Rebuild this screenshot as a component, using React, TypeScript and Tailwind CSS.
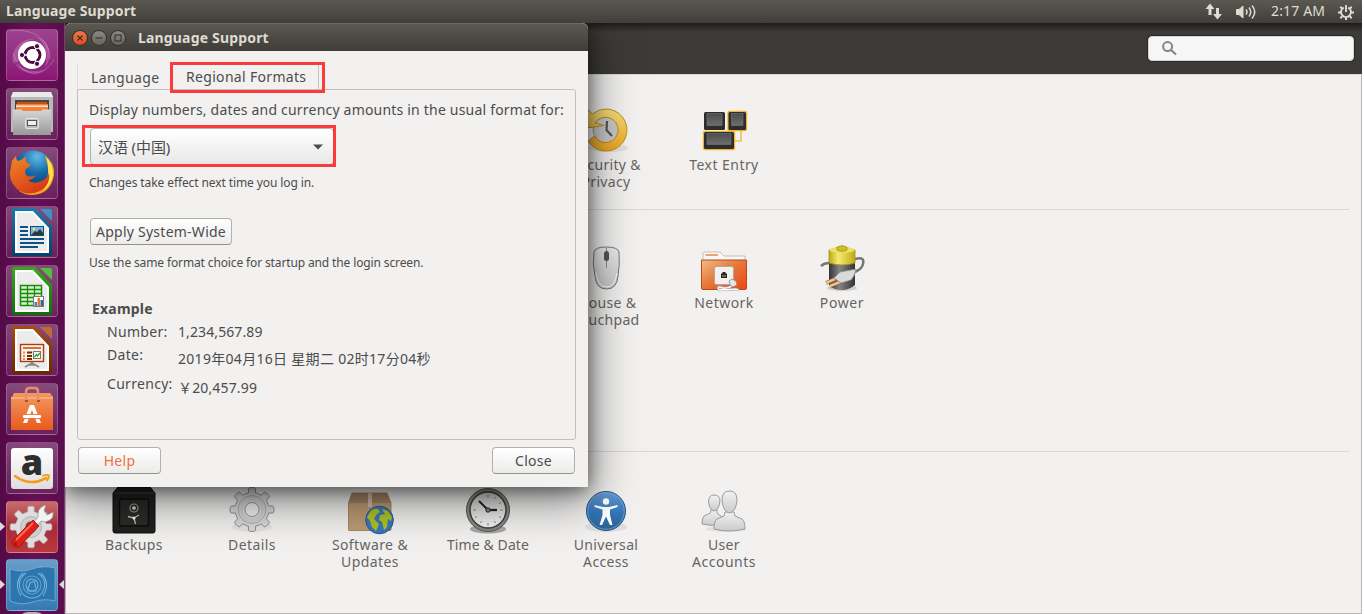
import type { ReactNode } from 'react';

function gearPath(cx: number, cy: number, outer: number, inner: number, teeth: number) {
  const pts: string[] = [];
  const step = (Math.PI * 2) / teeth;
  for (let i = 0; i < teeth; i++) {
    const a = i * step - Math.PI / 2;
    const add = (r: number, t: number) =>
      pts.push(`${(cx + r * Math.cos(a + t * step)).toFixed(2)} ${(cy + r * Math.sin(a + t * step)).toFixed(2)}`);
    add(inner, -0.27);
    add(outer - 1, -0.21);
    add(outer, -0.14);
    add(outer, 0.14);
    add(outer - 1, 0.21);
    add(inner, 0.27);
    add(inner, 0.4);
  }
  return `M${pts.join('L')}Z`;
}

/* ---------- launcher ---------- */

function Tile({ tone, left, right, children }: { tone: string; left?: boolean; right?: boolean; children: ReactNode }) {
  return (
    <div className="relative h-[52px] w-[52px] shrink-0">
      <div className={`h-full w-full rounded-[4px] border border-white/20 ${tone}`} />
      <svg className="absolute inset-0 overflow-visible" width="52" height="52" viewBox="0 0 52 52">
        {children}
      </svg>
      {left && (
        <svg className="absolute top-[21px] -left-[6px]" width="5" height="9" viewBox="0 0 5 9">
          <path d="M0 0L5 4.5L0 9Z" fill="#dcd8dc" />
        </svg>
      )}
      {right && (
        <svg className="absolute top-[21px] -right-[6px]" width="5" height="9" viewBox="0 0 5 9">
          <path d="M5 0L0 4.5L5 9Z" fill="#dcd8dc" />
        </svg>
      )}
    </div>
  );
}

function OfficeDoc({ edge, dark, fold, children }: { edge: string; dark: string; fold: string; children: ReactNode }) {
  const id = `doc${edge.slice(1)}`;
  return (
    <>
      <defs>
        <linearGradient id={id} x1="0" y1="0" x2="0" y2="1">
          <stop offset="0" stopColor={edge} />
          <stop offset="1" stopColor={dark} />
        </linearGradient>
      </defs>
      <path d="M8 2H29L46 20V48Q46 50 44 50H8Q6 50 6 48V4Q6 2 8 2Z" fill={`url(#${id})`} />
      <path d="M34 3H44Q46 3 46 5V15Z" fill={fold} />
      <path d="M9 5H27L43 22V47H9Z" fill="#fff" />
      <path d="M11 7H26L41 23V45H11Z" fill="#ececec" />
      {children}
    </>
  );
}

function Launcher() {
  const glass = 'bg-linear-to-b from-white/25 to-white/8';
  return (
    <div className="flex h-full w-[65px] shrink-0 flex-col gap-[7px] overflow-hidden border-r border-[#7d3b72] bg-linear-to-r from-[#540a47] via-[#651055] to-[#5a0d4c] pt-[6px] pl-[6px]">
      <Tile tone="bg-linear-to-b from-[#9c4290] to-[#8b1575]">
        <path d="M7 34C5 20 15 8 31 10C17 10 11 20 13 32ZM30 8C43 10 48 27 39 39C43 25 40 14 30 8ZM40 40C29 49 13 43 8 33C18 42 28 44 40 40Z" fill="#fff" opacity=".2" />
        <path d="M4 2C24 -1 44 8 44 30M48 30C37 51 15 49 7 24" fill="none" stroke="#e4b9dc" strokeWidth=".8" opacity=".4" />
        <circle cx="26" cy="26" r="14" fill="#fff" />
        <circle cx="26.5" cy="26" r="7.4" fill="none" stroke="#4b0c42" strokeWidth="3" />
        <path d="M26.5 26L17 26M26.5 26L31 17.5M26.5 26L31 34.5" stroke="#fff" strokeWidth="1.3" />
        <circle cx="26.500" cy="26" r="5.900" fill="#fff" />
        <g fill="#4b0c42" stroke="#fff" strokeWidth="1">
          <circle cx="16" cy="26" r="2.6" />
          <circle cx="31" cy="17.2" r="2.6" />
          <circle cx="31" cy="34.8" r="2.6" />
        </g>
      </Tile>
      <Tile tone={glass}>
        <defs>
          <linearGradient id="cab" x1="0" y1="0" x2="0" y2="1">
            <stop offset="0" stopColor="#d6d6d6" />
            <stop offset="1" stopColor="#999" />
          </linearGradient>
        </defs>
        <path d="M7 4H45L47 9V44H5V9Z" fill="#b9b9b9" />
        <path d="M7 4H45L47 9H5Z" fill="#e9e9e9" />
        <path d="M9 12H43V24H9Z" fill="#4b4642" />
        <path d="M11 14H41V17H11Z" fill="#b8590f" />
        <path d="M10 16H42V24H10Z" fill="#f0813f" />
        <path d="M10 17.5H42V19H10Z" fill="#fde3cf" />
        <path d="M7 21.500H15Q16 21.500 17 23H35Q36 21.500 37 21.500H45V47H7Z" fill="url(#cab)" />
        <rect x="19.500" y="30.500" width="13" height="10" rx="1.500" fill="#bdbdbd" stroke="#e4e4e4" />
        <rect x="21.500" y="32.500" width="9" height="5" fill="#eee" stroke="#555" />
      </Tile>
      <Tile tone={glass}>
        <defs>
          <radialGradient id="fxb" cx=".6" cy=".15" r=".8">
            <stop offset="0" stopColor="#5bbbe8" />
            <stop offset=".5" stopColor="#176aa8" />
            <stop offset="1" stopColor="#0b3c72" />
          </radialGradient>
          <linearGradient id="fxo" x1="0" y1="0" x2=".6" y2="1">
            <stop offset="0" stopColor="#f08a24" />
            <stop offset="1" stopColor="#d93a17" />
          </linearGradient>
        </defs>
        <circle cx="27" cy="24" r="20.500" fill="url(#fxb)" />
        <path d="M39 9Q49 15 48 28Q45 47 26 48Q19 48 13 44L28 43Q37 41 41 32Q44 22 39 9Z" fill="#f9a51b" />
        <path d="M40 10Q47 17 47 28Q45 38 38 43Q43 32 42 27Q43 18 40 10Z" fill="#ffe552" />
        <path d="M6 14Q8 11 10 9Q10 13 12 14Q18 12 20 9Q19 13 21 16L25 17Q24 20 20 22Q18 25 20 28Q23 31 30 28Q27 33 22 33Q27 38 36 34Q42 31 43 25Q45 38 34 44Q21 50 11 42Q1 32 5 20Z" fill="url(#fxo)" />
      </Tile>
      <Tile tone={glass}>
        <OfficeDoc edge="#1d79ae" dark="#073f6b" fold="#3b92c4">
          <path d="M14 21H22M14 25H22M14 29H22M14 33H38M14 37H38M14 41H32" stroke="#0d5286" strokeWidth="1.800" />
          <rect x="24.500" y="20.500" width="13" height="9" fill="#79b5df" stroke="#0d4e80" />
          <path d="M25 29L29 25L31 26L34 23L37 27V29Z" fill="#333a2c" />
          <circle cx="28" cy="23" r="1.200" fill="#ffe37a" />
        </OfficeDoc>
      </Tile>
      <Tile tone={glass}>
        <OfficeDoc edge="#38a81f" dark="#0e6f06" fold="#55bd40">
          <rect x="14.500" y="20.500" width="21" height="20" fill="#d6f3cd" stroke="#1b8a0b" strokeWidth="1.500" />
          <path d="M14 24.500H36M14 28.500H36M14 32.500H36M14 36.500H36M21.500 20V41M28.500 20V41" stroke="#1b8a0b" strokeWidth="1.300" />
          <rect x="27.500" y="31.500" width="10" height="10" fill="#fff" stroke="#777" />
          <path d="M28.500 37H31V41H28.500Z" fill="#2b8ee0" />
          <path d="M31.500 33H34V41H31.500Z" fill="#f0761d" />
          <path d="M34.500 35H37V41H34.500Z" fill="#1c6bb4" />
        </OfficeDoc>
      </Tile>
      <Tile tone={glass}>
        <OfficeDoc edge="#a84c12" dark="#6b2600" fold="#bd6c37">
          <path d="M26 38V40M26 39L19 43M26 39L33 43M22 41H30" stroke="#888" strokeWidth="1.500" fill="none" />
          <rect x="14.500" y="20.500" width="23" height="17" fill="#fdf2ec" stroke="#ab3d0b" strokeWidth="1.400" />
          <path d="M17 24H35" stroke="#d0602a" strokeWidth="1.800" />
          <path d="M17 28.500H19M17 32H19M17 35H19" stroke="#e88a50" strokeWidth="1.800" />
          <path d="M21 28.500H26M21 32H26M21 35H26" stroke="#7a2900" strokeWidth="1.800" />
          <rect x="27.500" y="27.500" width="7" height="7" fill="#fff" stroke="#777" />
          <path d="M28.500 33L30.500 30.500L31.500 32L34 29" stroke="#2b9e2b" strokeWidth="1.300" fill="none" />
        </OfficeDoc>
      </Tile>
      <Tile tone={glass}>
        <defs>
          <linearGradient id="bag" x1="0" y1="0" x2="0" y2="1">
            <stop offset="0" stopColor="#f3995f" />
            <stop offset="1" stopColor="#ea5a1c" />
          </linearGradient>
        </defs>
        <path d="M6 14L8 10H44L47 14V47H5V14Z" fill="url(#bag)" />
        <path d="M5 14H47V16H5Z" fill="#f8bd94" opacity=".6" />
        <path d="M20 18V9Q20 5 24 5H29Q32 5 32 9V18" fill="none" stroke="#e89168" strokeWidth="2.500" />
        <path d="M19 17H22V19H19ZM31 17H34V19H31Z" fill="#b64b25" />
        <path d="M24 22H28L35 40H31L26 27L21 40H17Z" fill="#fff" />
        <rect x="16.500" y="31.500" width="19" height="4" rx="1.500" fill="#fff" stroke="#ee6f32" strokeWidth=".9" />
      </Tile>
      <Tile tone={glass}>
        <defs>
          <linearGradient id="amz" x1="0" y1="0" x2="0" y2="1">
            <stop offset="0" stopColor="#fff" />
            <stop offset="1" stopColor="#dedede" />
          </linearGradient>
        </defs>
        <rect x="5" y="6" width="42" height="41" rx="3" fill="url(#amz)" />
        <text x="26" y="33" textAnchor="middle" fontFamily="Open Sans, Noto Sans, sans-serif" fontWeight="800" fontSize="36" fill="#2d2d2d">
          a
        </text>
        <path d="M9 34Q24 45 40 36" fill="none" stroke="#f79a15" strokeWidth="2.600" strokeLinecap="round" />
        <path d="M36 34Q41 32 43 33.500Q43 36.500 40.500 39" fill="none" stroke="#f79a15" strokeWidth="1.800" />
      </Tile>
      <Tile tone="bg-linear-to-b from-[#c86b6e] via-[#a62b37] to-[#ba3840]" left>
        <path d={gearPath(25, 26, 21, 15.5, 8)} fill="#dedede" stroke="#aaa" strokeWidth=".7" />
        <circle cx="25" cy="26" r="10.500" fill="#cfcfcf" stroke="#b6b6b6" />
        <circle cx="25" cy="26" r="6" fill="#a92f3b" stroke="#bbb" />
        <path d="M27 22L32 16Q31 8 37 5L40 4L38 10L41 14L47 11Q48 18 42 20Q38 22 35 20L30 26Z" fill="#f3f3f3" stroke="#949494" strokeWidth=".8" />
        <path d="M27 19L33 25L14 45Q10 48 7 45Q4 42 8 38Z" fill="#dd2018" stroke="#a50f0c" strokeWidth=".8" />
        <path d="M27 22L10 39" stroke="#ff6c5c" strokeWidth="1.800" />
        <circle cx="9.500" cy="43" r="1.500" fill="#a30f0b" />
      </Tile>
      <div className="-mt-px">
        <Tile tone="bg-linear-to-b from-[#6a9dc8] to-[#3579b3]" left right>
          <path d="M4 10Q16 14 26 10Q38 6 49 9V42Q38 39 27 43Q15 47 4 42Z" fill="#2b76ae" stroke="#7fb0d6" strokeWidth=".8" />
          <g fill="none" stroke="#78afd8" strokeWidth="1.100">
            <circle cx="26" cy="26" r="6" />
            <circle cx="26" cy="26" r="9" opacity=".7" />
            <path d="M20 14Q9 22 16 34Q20 39 26 39M32 14Q43 22 36 34Q32 39 26 39M17 14Q7 24 15 37M35 14Q45 24 37 37" />
            <path d="M22 30L24 24L28 22L30 29M21 32H31" />
          </g>
        </Tile>
      </div>
      <div className="-mt-[6px] ml-[12px] h-[20px] w-[28px] shrink-0 rounded-full bg-[#b5b3b6]" />
    </div>
  );
}

/* ---------- settings icons (48 × 48) ---------- */

function Icon({ children }: { children: ReactNode }) {
  return (
    <svg width="48" height="48" viewBox="0 0 48 48" className="shrink-0 overflow-visible">
      {children}
    </svg>
  );
}

const SecurityIcon = () => (
  <Icon>
    <defs>
      <linearGradient id="sec" x1="0" y1="0" x2="0" y2="1">
        <stop offset="0" stopColor="#f4df7c" />
        <stop offset="1" stopColor="#eca61d" />
      </linearGradient>
    </defs>
    <ellipse cx="26" cy="42" rx="20" ry="4" fill="#000" opacity=".08" />
    <circle cx="24" cy="24" r="13" fill="#c9c9c9" stroke="#999" />
    <path d="M24 3A21 21 0 1 1 6 35L12.500 30A12.600 12.600 0 1 0 13 17L22 19.500L5 22V3L10.500 8A21 21 0 0 1 24 3Z" fill="url(#sec)" stroke="#bc830f" strokeWidth=".9" />
    <path d="M25 15L24.500 24L30 30" fill="none" stroke="#555" strokeWidth="2.200" />
  </Icon>
);

const Key = ({ x, y, w, h, glow }: { x: number; y: number; w: number; h: number; glow?: boolean }) => (
  <g>
    {glow && <rect x={x - 1.2} y={y - 1.2} width={w + 2.4} height={h + 2.4} rx="2" fill="#f1b62e" />}
    <rect x={x} y={y} width={w} height={h} rx="1.500" fill="#2d2d2d" />
    <rect x={x + 3} y={y + 1.5} width={w - 6} height={h - 6} fill="url(#keytop)" stroke="#777" strokeWidth=".6" />
  </g>
);

const TextEntryIcon = () => (
  <Icon>
    <defs>
      <linearGradient id="keytop" x1="0" y1="0" x2="0" y2="1">
        <stop offset="0" stopColor="#4c4c4c" />
        <stop offset="1" stopColor="#6e6e6e" />
      </linearGradient>
    </defs>
    <path d="M34 35H41V22" fill="none" stroke="#e9ae2d" strokeWidth="1.200" />
    <Key x={4} y={6} w={21} h={18} />
    <Key x={28.5} y={6} w={17.5} h={18} glow />
    <Key x={4} y={26} w={30} h={17} glow />
  </Icon>
);

const MouseIcon = () => (
  <Icon>
    <defs>
      <linearGradient id="mouse" x1="0" y1="0" x2="0" y2="1">
        <stop offset="0" stopColor="#ededed" />
        <stop offset="1" stopColor="#c7c7c7" />
      </linearGradient>
    </defs>
    <path d="M12 8Q13 3 24 3Q36 3 37 8Q38 20 36 32Q35 45 24.500 45Q14 45 13 32Q10 20 12 8Z" fill="url(#mouse)" stroke="#777" strokeWidth="1" />
    <path d="M14 29Q16 43 24.500 43Q33 43 35 29" fill="none" stroke="#fff" />
    <path d="M24.500 4V24" stroke="#777" strokeWidth=".8" />
    <rect x="22" y="7" width="5" height="10" rx="2.500" fill="#555" />
  </Icon>
);

const NetworkIcon = () => (
  <Icon>
    <defs>
      <linearGradient id="net" x1="0" y1="0" x2="1" y2="1">
        <stop offset="0" stopColor="#f3bd86" />
        <stop offset=".45" stopColor="#e57b3c" />
        <stop offset="1" stopColor="#ef4412" />
      </linearGradient>
    </defs>
    <path d="M3 18V9Q3 8 4 8H20L24 12H45V18Z" fill="#f8f7f6" stroke="#b8b5b2" strokeWidth=".8" />
    <path d="M5.500 11H18" stroke="#f2a071" strokeWidth="2" />
    <path d="M1.500 16H46.500V44Q46.500 45.500 45 45.500H3Q1.500 45.500 1.500 44Z" fill="url(#net)" stroke="#b54a20" />
    <rect x="14.500" y="22.500" width="19" height="18" rx="2" fill="#f2f1ef" stroke="#b6a89f" />
    <path d="M21 29.500H22.500V28H25.500V29.500H27V34H21Z" fill="#222" />
    <path d="M22 32H26" stroke="#b7b328" />
    <path d="M33 41Q27 46 20 43Q17 43 19 46Q23 45 27 46Q39 44 38 47" fill="none" stroke="#aaa" strokeWidth="2.500" />
    <path d="M33 41Q27 46 20 43Q17 43 19 46Q23 45 27 46Q39 44 38 47" fill="none" stroke="#fff" strokeWidth="1.300" />
    <path d="M29 37L32 35L36 37L37 41L33 43L30 41Z" fill="#e5e5e5" stroke="#888" strokeWidth=".8" />
  </Icon>
);

const PowerIcon = () => (
  <Icon>
    <defs>
      <linearGradient id="bat" x1="0" y1="0" x2="1" y2="0">
        <stop offset="0" stopColor="#333" />
        <stop offset=".4" stopColor="#858585" />
        <stop offset="1" stopColor="#333" />
      </linearGradient>
      <linearGradient id="baty" x1="0" y1="0" x2="1" y2="0">
        <stop offset="0" stopColor="#bba818" />
        <stop offset=".35" stopColor="#f5eb74" />
        <stop offset="1" stopColor="#c0ab16" />
      </linearGradient>
    </defs>
    <ellipse cx="24" cy="44" rx="15" ry="3" fill="#000" opacity=".15" />
    <path d="M37 15Q47 12 45 20Q44 25 37 28M3 22Q6 19 11 19" fill="none" stroke="#777" strokeWidth="2.500" />
    <path d="M11 18H37V41Q31 46 24 46Q15 46 11 41Z" fill="url(#bat)" />
    <path d="M11 6Q24 1 37 6V19Q24 23 11 19Z" fill="url(#baty)" stroke="#a28e14" strokeWidth=".8" />
    <ellipse cx="24" cy="6" rx="12.500" ry="3" fill="#eee060" />
    <path d="M19 3Q24 0 29 3V6Q24 9 19 6Z" fill="#d2be23" stroke="#958312" strokeWidth=".6" />
    <path d="M17 35L8 39M22 38L12 42" stroke="#a8703d" strokeWidth="3.600" />
    <path d="M17 35L8 39M22 38L12 42" stroke="#efca9a" strokeWidth="2" />
    <path d="M16 34L22 28L38 25Q37 32 33 36L23 39Z" fill="#dadada" stroke="#888" strokeWidth=".8" />
  </Icon>
);

const BackupsIcon = () => (
  <Icon>
    <path d="M8 0H40L45 6V44Q45 46 43 46H5Q3 46 3 44V6Z" fill="#20211f" stroke="#0d0d0d" />
    <path d="M4 6H44" stroke="#4c4d48" />
    <rect x="9.500" y="12" width="29" height="27" rx="2" fill="#2a2b28" stroke="#0c0c0c" strokeWidth="1.400" />
    <circle cx="24" cy="21" r="4" fill="none" stroke="#999" strokeWidth="1.200" />
    <circle cx="24" cy="21" r="1.800" fill="#ddd" />
    <path d="M24 31L18 29.500M24 31L29 28M24 31L25.500 37" stroke="#bbb" strokeWidth="1.300" />
    <circle cx="24" cy="31" r="1.500" fill="#fff" />
  </Icon>
);

const DetailsIcon = () => (
  <Icon>
    <ellipse cx="24" cy="40" rx="20" ry="5" fill="#000" opacity=".06" />
    <path d={gearPath(24, 22.5, 22, 17, 8)} fill="#d9d9d9" stroke="#8d8d8d" />
    <circle cx="24" cy="22.500" r="14" fill="#d0d0d0" stroke="#b0b0b0" />
    <circle cx="24" cy="22.500" r="7" fill="#f2f1f0" stroke="#999" />
    <circle cx="24" cy="22.500" r="8.500" fill="none" stroke="#ddd" />
  </Icon>
);

const SoftwareIcon = () => (
  <Icon>
    <path d="M2.500 16L6 6H41L45 16V43Q45 43.500 44 43.500H3.500Q2.500 43.500 2.500 43Z" fill="#bd9a72" stroke="#987957" strokeWidth=".8" />
    <path d="M2.500 16L6 6H41L45 16Z" fill="#a58464" />
    <path d="M22 6H26V20H22Z" fill="#d2bfaa" />
    <circle cx="33.500" cy="33" r="13.800" fill="#3d76bb" stroke="#295795" />
    <path d="M24 25Q27 21 32 22L34 25L30 28L28 32L33 37L30 44L26 40L24 34L21 30ZM36 22L42 24L46 30L45 34L42 32L41 40L38 43L36 35L33 33L34 28L39 27Z" fill="#aec322" />
  </Icon>
);

const ClockIcon = () => (
  <Icon>
    <defs>
      <linearGradient id="clk" x1="0" y1="0" x2="0" y2="1">
        <stop offset="0" stopColor="#d0d0ce" />
        <stop offset="1" stopColor="#f3f3f3" />
      </linearGradient>
    </defs>
    <ellipse cx="24" cy="42" rx="18" ry="4.500" fill="#000" opacity=".3" />
    <circle cx="24" cy="23" r="21.500" fill="#868985" stroke="#555753" />
    <circle cx="24" cy="23" r="18" fill="url(#clk)" stroke="#40423f" strokeWidth="1.500" />
    <path d="M24 8V11M24 36V39M9 23H12M36 23H39M31.500 10L30.500 12M37 15.500L35 16.500M16.500 36L17.500 34M31.500 36L30.500 34M11 30.500L13 29.500M37 30.500L35 29.500" stroke="#888" />
    <path d="M24 23L15 14" stroke="#222" strokeWidth="1.900" />
    <path d="M24 23H33" stroke="#222" strokeWidth="2.300" />
    <circle cx="24" cy="23" r="2.200" fill="#888" stroke="#222" />
  </Icon>
);

const AccessIcon = () => (
  <Icon>
    <defs>
      <linearGradient id="acc" x1="0" y1="0" x2="0" y2="1">
        <stop offset="0" stopColor="#6b9bd4" />
        <stop offset=".55" stopColor="#3276ba" />
        <stop offset="1" stopColor="#29638e" />
      </linearGradient>
    </defs>
    <ellipse cx="24" cy="40" rx="21" ry="5" fill="#000" opacity=".08" />
    <circle cx="24" cy="24" r="19.500" fill="url(#acc)" stroke="#235486" />
    <circle cx="24" cy="24" r="18.300" fill="none" stroke="#84afdd" strokeWidth=".7" />
    <circle cx="24" cy="14.500" r="3.200" fill="#fff" />
    <path d="M12.500 18L21 20H27L35.500 18V20L28 22.500V28L30.500 38H28L24 29.500L20 38H17.500L20.500 28V22.500L12.500 20Z" fill="#fff" />
  </Icon>
);

const UsersIcon = () => (
  <Icon>
    <defs>
      <linearGradient id="usr" x1="0" y1="0" x2="0" y2="1">
        <stop offset="0" stopColor="#f2f2f2" />
        <stop offset="1" stopColor="#cacaca" />
      </linearGradient>
    </defs>
    <ellipse cx="26" cy="42" rx="20" ry="3" fill="#000" opacity=".07" />
    <g fill="url(#usr)" stroke="#9b9b9b" strokeWidth="1">
      <path d="M11 23L10.500 26L4 29Q2 31 2 37Q12 40 23 37Q24 31 21 29L17 26V23Z" />
      <path d="M8.500 14Q9 8 14 8Q20 8 20 14Q19 23 14 24Q9 23 8.500 14Z" />
      <path d="M25 25L24 29L17 32Q14 34 14 42Q29 46 45 42Q45 34 42 32L35 29L34 25Z" />
      <path d="M22 13Q22 4 29.500 4Q37 4 37 13Q36 25 29.500 26Q23 25 22 13Z" />
    </g>
  </Icon>
);

function Item({ col, icon, lines, tracks }: { col: string; icon: ReactNode; lines: string[]; tracks: string[] }) {
  return (
    <div className={`flex w-[118px] flex-col items-center pt-[1px] ${col}`}>
      {icon}
      <div className="mt-[2px] text-center text-[14px] leading-[17px] whitespace-nowrap text-[#666563]">
        {lines.map((l, i) => (
          <div key={l} className={tracks[i]}>
            {l}
          </div>
        ))}
      </div>
    </div>
  );
}

function SettingsWindow() {
  const row = 'grid grid-cols-[repeat(7,118px)] pl-[9px]';
  return (
    <div className="flex h-full flex-1 flex-col">
      <div className="flex h-[52px] shrink-0 items-center justify-end border-b border-[#dad7d3] bg-linear-to-b from-[#1e1d1b] from-0% via-[#3c3b37] via-18% to-[#3c3b37] pr-2">
        <div className="flex h-[25px] w-[206px] items-center rounded-[4px] border border-[#d8d6d3] bg-[#f6f6f6] pl-[13px] shadow-[0_0_1px_1px_#2b2a27]">
          <svg width="15" height="15" viewBox="0 0 15 15" fill="none" stroke="#858585" strokeWidth="2">
            <circle cx="5.600" cy="5.600" r="4.500" />
            <path d="M9 9L14 13.500" strokeWidth="2.200" />
          </svg>
        </div>
      </div>
      <div className="flex flex-1 flex-col border-x border-b border-[#b9b6b3] bg-[#f2f1f0] pr-[12px]">
        <div className={`${row} h-[135px] border-b border-[#d9d7d5] pt-[30px]`}>
          <Item col="col-start-5" icon={<SecurityIcon />} lines={['Security &', 'Privacy']} tracks={['tracking-[0.3px]', 'tracking-[0.3px]']} />
          <Item col="col-start-6" icon={<TextEntryIcon />} lines={['Text Entry']} tracks={['tracking-[0.45px]']} />
        </div>
        <div className={`${row} h-[242px] border-b border-[#d9d7d5] pt-[33px]`}>
          <Item col="col-start-5" icon={<MouseIcon />} lines={['Mouse &', 'Touchpad']} tracks={['tracking-[0.3px]', 'tracking-[0.35px]']} />
          <Item col="col-start-6" icon={<NetworkIcon />} lines={['Network']} tracks={['tracking-[0.45px]']} />
          <Item col="col-start-7" icon={<PowerIcon />} lines={['Power']} tracks={['tracking-[0.6px]']} />
        </div>
        <div className={`${row} pt-[33px] [&_svg]:relative [&_svg]:top-px`}>
          <Item col="col-start-1" icon={<BackupsIcon />} lines={['Backups']} tracks={['tracking-[0.4px]']} />
          <Item col="col-start-2" icon={<DetailsIcon />} lines={['Details']} tracks={['tracking-[0.4px]']} />
          <Item col="col-start-3" icon={<SoftwareIcon />} lines={['Software &', 'Updates']} tracks={['tracking-[0.4px]', 'tracking-[0.4px]']} />
          <Item col="col-start-4" icon={<ClockIcon />} lines={['Time & Date']} tracks={['tracking-[0.1px]']} />
          <Item col="col-start-5" icon={<AccessIcon />} lines={['Universal', 'Access']} tracks={['tracking-[0.35px]', 'tracking-[0.35px]']} />
          <Item col="col-start-6" icon={<UsersIcon />} lines={['User', 'Accounts']} tracks={['tracking-[0.3px]', 'tracking-[0.5px]']} />
        </div>
      </div>
    </div>
  );
}

/* ---------- dialog ---------- */

const button =
  'flex h-[27px] items-center justify-center rounded-[4px] border border-[#b4b1ad] border-b-[#96938f] bg-linear-to-b from-white to-[#ececeb] text-[14px] whitespace-nowrap tracking-[0.25px]';

function WindowButton({ tone, children }: { tone: string; children: ReactNode }) {
  return (
    <div className={`flex h-[16px] w-[16px] items-center justify-center rounded-full border border-[#31302c] ${tone}`}>
      <svg width="14" height="14" viewBox="0 0 14 14" fill="none" stroke="#33322e" strokeWidth="1.100" className="shrink-0">
        {children}
      </svg>
    </div>
  );
}

function Dialog() {
  return (
    <div className="absolute top-0 left-[65px] flex h-[464px] w-[523px] flex-col rounded-t-[6px] bg-[#f2f1f0] text-[#4c4c4c]">
      <div className="flex h-[28px] shrink-0 items-center rounded-t-[6px] border-t border-[#6b6961] bg-linear-to-b from-[#5a5850] to-[#3e3d38] pl-[7px]">
        <div className="flex gap-[3px]">
          <WindowButton tone="bg-linear-to-b from-[#f4764a] to-[#dd4b1c]">
            <path d="M4.500 4.500L9.500 9.500M9.500 4.500L4.500 9.500" />
          </WindowButton>
          <WindowButton tone="bg-linear-to-b from-[#8b8981] to-[#66645d]">
            <path d="M3.500 7H10.500" />
          </WindowButton>
          <WindowButton tone="bg-linear-to-b from-[#8b8981] to-[#66645d]">
            <rect x="4" y="4" width="6" height="6" />
          </WindowButton>
        </div>
        <div className="ml-[12px] text-[14px] leading-[20px] font-bold tracking-[0.17px] whitespace-nowrap text-[#dfdbd2]">Language Support</div>
      </div>

      <div className="flex h-[38px] shrink-0 items-end pl-[12px] text-[14px] leading-[20px] whitespace-nowrap">
        <div className="h-[26px] w-[94px] border-l border-[#dedbd8] pt-[5px] pl-[13px] tracking-[0.4px]">Language</div>
        <div className="h-[27px] w-[148px] rounded-t-[4px] border border-b-0 border-[#c6c3c0] pt-[4px] pl-[14px] tracking-[0.32px]">Regional Formats</div>
      </div>

      <div className="mx-[12px] flex h-[351px] shrink-0 flex-col rounded-b-[3px] rounded-tr-[3px] border border-[#c2bfbc] px-[11px] pt-[10px] whitespace-nowrap">
        <div className="text-[14px] leading-[20px] tracking-[0.2px]">Display numbers, dates and currency amounts in the usual format for:</div>
        <div className="mt-[8px] ml-[1px] flex h-[37px] w-[244px] items-center justify-between rounded-[4px] border border-[#b4b1ad] bg-linear-to-b from-white to-[#e9e8e7] pr-[10px] pl-[7px]">
          <span className="pt-[2px] text-[15px] tracking-[-0.1px]">汉语 (中国)</span>
          <svg width="10" height="6" viewBox="0 0 10 6">
            <path d="M0 0.500H10L5 5.500Z" fill="#4c4c4c" />
          </svg>
        </div>
        <div className="mt-[9px] text-[12px] leading-[18px] tracking-[-0.1px]">Changes take effect next time you log in.</div>
        <div className={`${button} mt-[26px] ml-[1px] w-[142px]`}>Apply System-Wide</div>
        <div className="mt-[9px] text-[12px] leading-[18px] tracking-[-0.13px]">Use the same format choice for startup and the login screen.</div>
        <div className="mt-[27px] ml-[3px] text-[14px] leading-[20px] font-bold tracking-[0.2px]">Example</div>
        <div className="mt-[3px] ml-[18px] grid grid-cols-[71px_auto] text-[14px] leading-[20px] tracking-[0.3px]">
          <div className="h-[23px]">Number:</div>
          <div className="tracking-[0.1px]">1,234,567.89</div>
          <div className="h-[29px]">Date:</div>
          <div className="pt-[4px]">2019年04月16日 星期二 02时17分04秒</div>
          <div>Currency:</div>
          <div className="pt-[4px] tracking-[0.15px]">￥20,457.99</div>
        </div>
      </div>

      <div className="flex justify-between px-[13px] pt-[7px]">
        <div className={`${button} w-[83px] text-[#f0703c]`}>Help</div>
        <div className={`${button} w-[83px]`}>Close</div>
      </div>

      <div className="absolute top-[39px] left-[105px] h-[31px] w-[155px] border-3 border-[#fb3b3b]" />
      <div className="absolute top-[102px] left-[17px] h-[42px] w-[254px] border-3 border-[#fb3b3b]" />
    </div>
  );
}

/* ---------- top panel ---------- */

function TopPanel() {
  return (
    <div className="flex h-[23px] shrink-0 items-center justify-between bg-linear-to-b from-[#5a5850] to-[#403f3a] pr-[8px] pl-[6px] text-[14px] leading-[20px] text-[#dfdbd2]">
      <div className="-mt-px font-bold tracking-[0.14px] whitespace-nowrap">Language Support</div>
      <div className="flex items-center">
        <svg width="17" height="17" viewBox="0 0 17 17" fill="#dfdbd2">
          <path d="M5 0.500L9.500 6H6.500V12H3.500V6H0.500Z" />
          <path d="M12.500 16.500L17 11H14V5H11V11H8Z" />
        </svg>
        <svg className="ml-[14px]" width="21" height="16" viewBox="0 0 21 16" fill="none" stroke="#dfdbd2">
          <path d="M0.500 5.500H3L7 2V14L3 10.500H0.500Z" fill="#dfdbd2" />
          <path d="M10 5.500Q12 8 10 10.500" strokeWidth="1.500" />
          <path d="M13 3.500Q16.500 8 13 12.500" strokeWidth="1.500" />
          <path d="M16 1.500Q21.500 8 16 14.500" strokeWidth="1.500" />
        </svg>
        <div className="-mt-px ml-[14px] w-[54px] tracking-[0.15px] whitespace-nowrap">2:17 AM</div>
        <svg className="ml-[13px]" width="16" height="16" viewBox="0 0 16 16" fill="none" stroke="#dfdbd2">
          <path d="M5.800 3.600A5 5 0 1 0 10.200 3.600" strokeWidth="1.900" />
          <path d="M8 1V8" strokeWidth="1.900" />
          <path d="M0 8.500H3M13 8.500H16M2.300 2.800L4.400 4.900M13.700 2.800L11.600 4.900M2.300 14.200L4.400 12.100M13.700 14.200L11.600 12.100M8 13.500V16" strokeWidth="2" />
        </svg>
      </div>
    </div>
  );
}

export default function App() {
  return (
    <div className="h-[614px] w-[1364px] overflow-hidden bg-white pr-[2px] font-['Noto_Sans','Noto_Sans_CJK_SC',sans-serif]">
      <div className="flex h-full flex-col">
        <TopPanel />
        <div className="relative flex min-h-0 flex-1">
          <Launcher />
          <div className="min-w-0 flex-1 overflow-hidden">
            <div className="relative h-full">
              <SettingsWindow />
              <div className="absolute top-0 left-0 h-[464px] w-[523px] shadow-[0_10px_42px_3px_rgba(0,0,0,0.5),0_3px_16px_rgba(0,0,0,0.45)]" />
            </div>
          </div>
          <Dialog />
        </div>
      </div>
    </div>
  );
}
